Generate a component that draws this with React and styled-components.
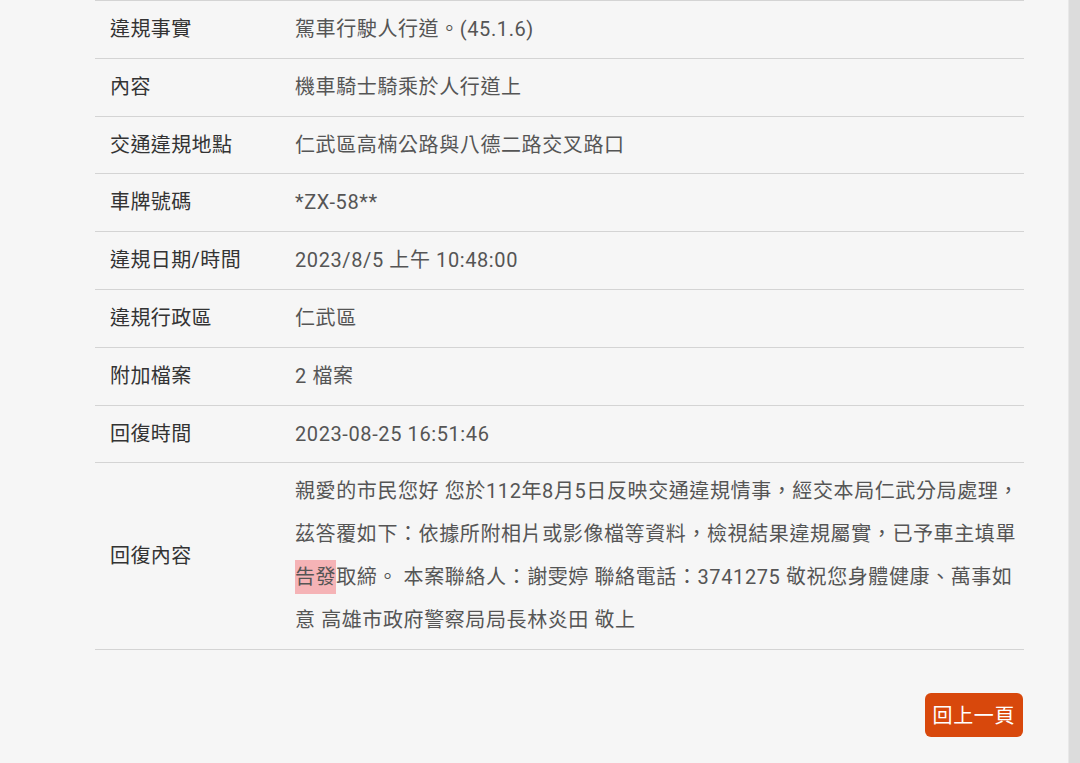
import React from "react";
import styled, { createGlobalStyle } from "styled-components";

const Global = createGlobalStyle`
  html, body { margin: 0; padding: 0; background: #f6f6f6; }
  body { font-family: Roboto, "Noto Sans CJK TC", "Noto Sans", sans-serif; }
`;

const Page = styled.div`
  display: flex;
  height: 763px;
  overflow: hidden;
`;

const Main = styled.main`
  flex: 1;
  padding: 0 44px 0 95px;
  background: #f6f6f6;
`;

const Scrollbar = styled.div`
  width: 11px;
  background: #dcdcdc;
  border-left: 1px solid #e8e8e8;
`;

const Table = styled.div`
  display: flex;
  flex-direction: column;
`;

const Row = styled.div`
  display: grid;
  grid-template-columns: 185px 1fr;
  align-items: center;
  border-top: 1px solid #d4d4d4;
  &:last-child { border-bottom: 1px solid #d4d4d4; }
`;

const Label = styled.div`
  padding: 7px 0 7px 15px;
  font-size: 20px;
  letter-spacing: 0.4px;
  line-height: 42.8px;
  color: #333;
`;

const Value = styled.div`
  padding: 7px 0 7px 15px;
  font-size: 20px;
  letter-spacing: 0.6px;
  line-height: 42.8px;
  color: #555;
  white-space: ${(p) => (p.$lines ? "nowrap" : "normal")};
`;

const Mark = styled.span`
  background: #f5b3b6;
  padding: 5px 0;
`;

const Footer = styled.div`
  display: flex;
  justify-content: flex-end;
  padding-top: 43px;
`;

const BackButton = styled.button`
  border: none;
  background: #d8480c;
  color: #fff;
  font-family: Roboto, "Noto Sans CJK TC", sans-serif;
  font-size: 20px;
  letter-spacing: 0.6px;
  height: 44px;
  padding: 0 8px;
  border-radius: 6px;
  margin-right: 1px;
`;

const rows = [
  ["違規事實", "駕車行駛人行道。(45.1.6)"],
  ["內容", "機車騎士騎乘於人行道上"],
  ["交通違規地點", "仁武區高楠公路與八德二路交叉路口"],
  ["車牌號碼", "*ZX-58**"],
  ["違規日期/時間", "2023/8/5 上午 10:48:00"],
  ["違規行政區", "仁武區"],
  ["附加檔案", "2 檔案"],
  ["回復時間", "2023-08-25 16:51:46"],
];

export default function App() {
  return (
    <>
      <Global />
      <Page>
        <Main>
          <Table>
            {rows.map(([k, v]) => (
              <Row key={k}>
                <Label>{k}</Label>
                <Value>{v}</Value>
              </Row>
            ))}
            <Row>
              <Label>回復內容</Label>
              <Value $lines>
                親愛的市民您好 您於112年8月5日反映交通違規情事，經交本局仁武分局處理，
                <br />
                茲答覆如下：依據所附相片或影像檔等資料，檢視結果違規屬實，已予車主填單
                <br />
                <Mark>告發</Mark>取締。 本案聯絡人：謝雯婷 聯絡電話：3741275 敬祝您身體健康、萬事如
                <br />
                意 高雄市政府警察局局長林炎田 敬上
              </Value>
            </Row>
          </Table>
          <Footer>
            <BackButton>回上一頁</BackButton>
          </Footer>
        </Main>
        <Scrollbar />
      </Page>
    </>
  );
}
